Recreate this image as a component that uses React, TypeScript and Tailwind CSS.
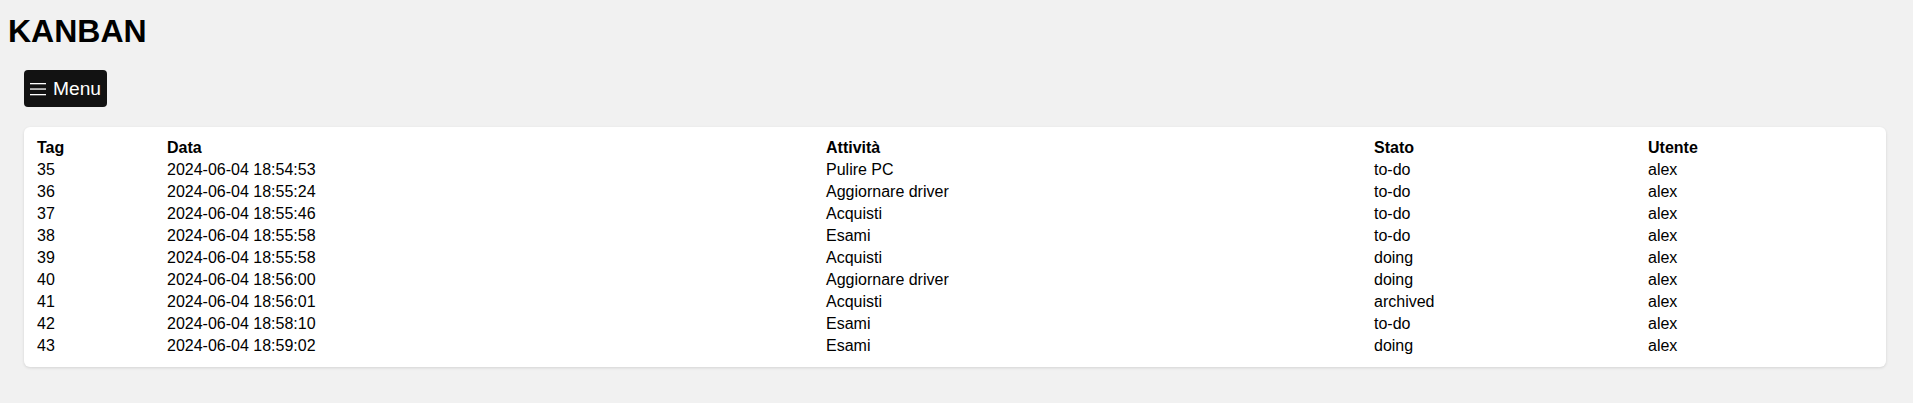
import React from "react";

const rows: [string, string, string, string, string][] = [
  ["35", "2024-06-04 18:54:53", "Pulire PC", "to-do", "alex"],
  ["36", "2024-06-04 18:55:24", "Aggiornare driver", "to-do", "alex"],
  ["37", "2024-06-04 18:55:46", "Acquisti", "to-do", "alex"],
  ["38", "2024-06-04 18:55:58", "Esami", "to-do", "alex"],
  ["39", "2024-06-04 18:55:58", "Acquisti", "doing", "alex"],
  ["40", "2024-06-04 18:56:00", "Aggiornare driver", "doing", "alex"],
  ["41", "2024-06-04 18:56:01", "Acquisti", "archived", "alex"],
  ["42", "2024-06-04 18:58:10", "Esami", "to-do", "alex"],
  ["43", "2024-06-04 18:59:02", "Esami", "doing", "alex"],
];

export default function App() {
  return (
    <div
      className="min-h-[403px] w-full bg-[#f1f1f1] px-2 pt-[13px] pb-8 text-black"
      style={{ fontFamily: '"Liberation Sans", Arial, sans-serif' }}
    >
      <h1 className="text-[32px] font-bold leading-[37px]">KANBAN</h1>
      <div className="mt-[20px] ml-4">
        <button className="flex h-[37px] items-center rounded-[4px] bg-[#121212] px-[6px] text-[19.2px] leading-[22px] text-white">
          <svg width="16" height="14" viewBox="0 0 16 14" className="mr-[7px]">
            <rect x="0" y="1" width="16" height="1.3" fill="#fff" />
            <rect x="0" y="6.4" width="16" height="1.3" fill="#fff" />
            <rect x="0" y="12" width="16" height="1.3" fill="#fff" />
          </svg>
          <span>Menu</span>
        </button>
      </div>
      <div className="mt-[20px] ml-4 mr-[19px] rounded-[6px] bg-white px-[10px] py-[9px] shadow-[0_1px_3px_rgba(0,0,0,0.12)]">
        <table className="w-full table-fixed border-separate border-spacing-[2px] text-left text-[16px] leading-[18px]">
          <colgroup>
            <col className="w-[128px]" />
            <col className="w-[657px]" />
            <col className="w-[546px]" />
            <col className="w-[272px]" />
            <col />
          </colgroup>
          <thead>
            <tr>
              <th className="p-px font-bold">Tag</th>
              <th className="p-px font-bold">Data</th>
              <th className="p-px font-bold">Attività</th>
              <th className="p-px font-bold">Stato</th>
              <th className="p-px font-bold">Utente</th>
            </tr>
          </thead>
          <tbody>
            {rows.map((r) => (
              <tr key={r[0]}>
                {r.map((c, i) => (
                  <td key={i} className="p-px">
                    {c}
                  </td>
                ))}
              </tr>
            ))}
          </tbody>
        </table>
      </div>
    </div>
  );
}
